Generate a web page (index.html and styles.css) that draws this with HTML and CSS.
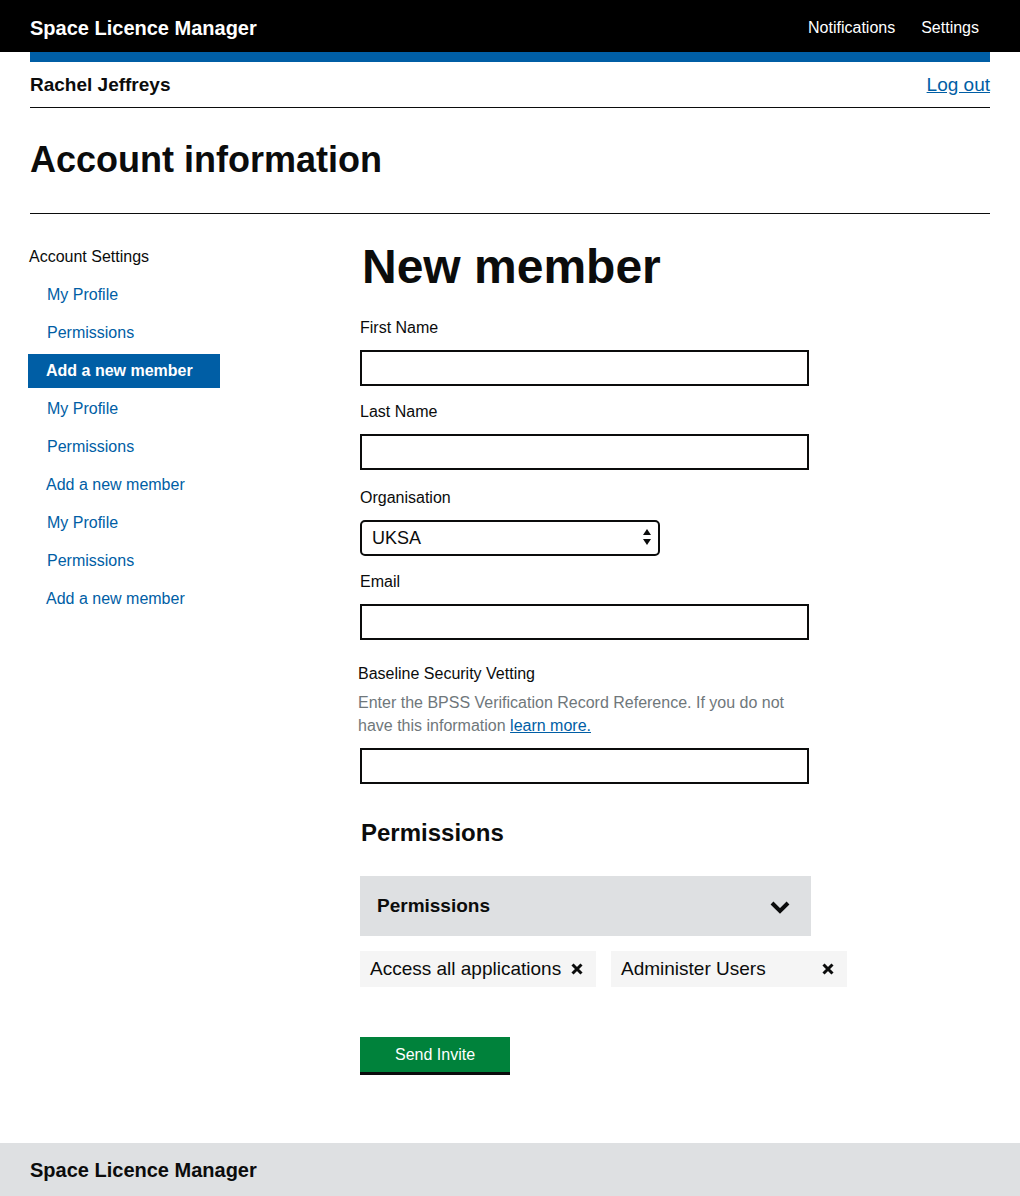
FILE: index.html
```html
<!DOCTYPE html>
<html lang="en">
<head>
<meta charset="utf-8">
<title>Space Licence Manager</title>
<link rel="stylesheet" href="styles.css">
</head>
<body>
<header class="topbar">
  <div class="topbar-inner">
    <span class="brand">Space Licence Manager</span>
    <nav class="topnav">
      <a href="#">Notifications</a>
      <a href="#">Settings</a>
    </nav>
  </div>
</header>
<div class="wrap">
  <div class="bluebar"></div>
  <div class="userrow">
    <span class="username">Rachel Jeffreys</span>
    <a class="logout" href="#">Log out</a>
  </div>
  <div class="titlerow">
    <h1 class="page-title">Account information</h1>
  </div>
  <div class="layout">
    <aside class="sidebar">
      <div class="side-title">Account Settings</div>
      <ul class="side-list">
        <li><a href="#" class="side-link">My Profile</a></li>
        <li><a href="#" class="side-link">Permissions</a></li>
        <li><a href="#" class="side-link active">Add a new member</a></li>
        <li><a href="#" class="side-link">My Profile</a></li>
        <li><a href="#" class="side-link">Permissions</a></li>
        <li><a href="#" class="side-link alt">Add a new member</a></li>
        <li><a href="#" class="side-link">My Profile</a></li>
        <li><a href="#" class="side-link">Permissions</a></li>
        <li><a href="#" class="side-link alt">Add a new member</a></li>
      </ul>
    </aside>
    <main class="main">
      <h2 class="main-title">New member</h2>
      <div class="field">
        <label class="label">First Name</label>
        <input class="input" type="text">
      </div>
      <div class="field">
        <label class="label">Last Name</label>
        <input class="input" type="text">
      </div>
      <div class="field field-org">
        <label class="label">Organisation</label>
        <div class="select-wrap">
          <select class="select"><option>UKSA</option></select>
          <svg class="select-arrows" width="10" height="20" viewBox="0 0 10 20" aria-hidden="true">
            <polygon points="1,7 5,1 9,7" fill="#0b0c0c"/>
            <polygon points="1,11 9,11 5,17" fill="#0b0c0c"/>
          </svg>
        </div>
      </div>
      <div class="field field-email">
        <label class="label">Email</label>
        <input class="input" type="email">
      </div>
      <div class="field field-bpss">
        <label class="label label-shift">Baseline Security Vetting</label>
        <p class="hint">Enter the BPSS Verification Record Reference. If you do not have this information <a href="#" class="hint-link">learn more.</a></p>
        <input class="input" type="text">
      </div>
      <h3 class="perm-title">Permissions</h3>
      <div class="dropdown">
        <span class="dropdown-label">Permissions</span>
        <svg class="chevron" width="20" height="13" viewBox="0 0 20 13" aria-hidden="true">
          <polyline points="2,2 10,10 18,2" fill="none" stroke="#0b0c0c" stroke-width="4"/>
        </svg>
      </div>
      <div class="tags">
        <span class="tag">Access all applications
          <svg class="tag-x" width="12" height="12" viewBox="0 0 12 12" aria-hidden="true">
            <path d="M1.5 1.5 L10.5 10.5 M10.5 1.5 L1.5 10.5" stroke="#0b0c0c" stroke-width="3"/>
          </svg>
        </span>
        <span class="tag">Administer Users
          <svg class="tag-x" width="12" height="12" viewBox="0 0 12 12" aria-hidden="true">
            <path d="M1.5 1.5 L10.5 10.5 M10.5 1.5 L1.5 10.5" stroke="#0b0c0c" stroke-width="3"/>
          </svg>
        </span>
      </div>
      <button class="btn" type="button">Send Invite</button>
    </main>
  </div>
</div>
<footer class="footer">
  <span class="footer-brand">Space Licence Manager</span>
</footer>
</body>
</html>
```

FILE: styles.css
```css
* { box-sizing: border-box; }
html, body { margin: 0; padding: 0; }
body {
  font-family: "Liberation Sans", Arial, sans-serif;
  color: #0b0c0c;
  background: #fff;
}
a { color: #005ea5; }

.topbar { background: #000; height: 52px; }
.topbar-inner {
  height: 52px;
  padding: 4px 41px 0 30px;
  display: flex;
  align-items: center;
  justify-content: space-between;
}
.brand { color: #fff; font-weight: 700; font-size: 20px; line-height: 24px; }
.topnav { display: flex; gap: 26px; }
.topnav a { color: #fff; text-decoration: none; font-size: 16px; line-height: 20px; }

.wrap { padding: 0 30px; }
.bluebar { height: 10px; background: #005ea5; }
.userrow {
  height: 46px;
  display: flex;
  align-items: center;
  justify-content: space-between;
  border-bottom: 1px solid #0b0c0c;
}
.username { font-weight: 700; font-size: 19px; line-height: 22px; }
.logout { font-size: 19px; line-height: 22px; color: #005ea5; text-decoration: underline; }

.titlerow { border-bottom: 1px solid #0b0c0c; padding: 30px 0 31px; }
.page-title { margin: 0; font-size: 36px; line-height: 44px; font-weight: 700; }

.layout { display: flex; }
.sidebar { width: 330px; flex: none; padding-top: 33px; }
.side-title { font-size: 16px; line-height: 20px; margin-left: -1px; }
.side-list { list-style: none; margin: 11px 0 0; padding: 0; display: flex; flex-direction: column; gap: 4px; }
.side-link {
  display: flex;
  align-items: center;
  height: 34px;
  width: 192px;
  margin-left: -2px;
  padding-left: 19px;
  font-size: 16px;
  color: #005ea5;
  text-decoration: none;
}
.side-link.alt { padding-left: 18px; }
.side-link.active { background: #005ea5; color: #fff; font-weight: 700; padding-left: 18px; }

.main { flex: 1; padding-top: 25px; }
.main-title { margin: 0 0 23px 2px; font-size: 48px; line-height: 56px; font-weight: 700; }

.field { margin-bottom: 16px; }
.field-org { padding-top: 2px; }
.field-bpss { padding-top: 8px; }
.label { display: block; font-size: 16px; line-height: 20px; margin-bottom: 12px; }
.label-shift { margin-left: -2px; margin-bottom: 7px; }
.input {
  display: block;
  width: 449px;
  height: 36px;
  border: 2px solid #0b0c0c;
  border-radius: 0;
  font: inherit;
  font-size: 18px;
  padding: 0 8px;
  background: #fff;
}
.select-wrap { display: grid; width: 300px; }
.select, .select-arrows { grid-area: 1 / 1; }
.select {
  appearance: none;
  -webkit-appearance: none;
  width: 300px;
  height: 36px;
  border: 2px solid #0b0c0c;
  border-radius: 5px;
  background: #fff;
  font-family: "Liberation Sans", Arial, sans-serif;
  font-size: 18px;
  color: #0b0c0c;
  padding: 0 10px;
}
.select-arrows { justify-self: end; align-self: center; margin-right: 8px; pointer-events: none; }

.hint {
  margin: 0 0 11px -2px;
  font-size: 16px;
  line-height: 23px;
  color: #6f777b;
  width: 440px;
}
.hint-link { color: #005ea5; text-decoration: underline; }

.perm-title { margin: 35px 0 29px 1px; font-size: 24px; line-height: 28px; font-weight: 700; }
.dropdown {
  width: 451px;
  height: 60px;
  background: #dee0e2;
  display: flex;
  align-items: center;
  justify-content: space-between;
  padding: 0 21px 0 17px;
}
.dropdown-label { font-size: 19px; font-weight: 700; line-height: 22px; }
.chevron { display: block; margin-top: 2px; }

.tags { display: flex; gap: 15px; margin-top: 15px; }
.tag {
  width: 236px;
  height: 36px;
  background: #f5f5f5;
  display: flex;
  align-items: center;
  justify-content: space-between;
  padding: 0 13px 0 10px;
  font-size: 19px;
  line-height: 22px;
}
.tag-x { display: block; flex: none; }

.btn {
  display: block;
  margin-top: 50px;
  width: 150px;
  height: 38px;
  background: #00823b;
  color: #fff;
  border: 0;
  border-bottom: 3px solid #0b0c0c;
  font-family: "Liberation Sans", Arial, sans-serif;
  font-size: 16px;
  padding: 0;
}

.footer {
  margin-top: 68px;
  background: #dee0e2;
  height: 60px;
  padding: 15px 30px 0;
}
.footer-brand { font-size: 20px; font-weight: 700; line-height: 24px; }
```
